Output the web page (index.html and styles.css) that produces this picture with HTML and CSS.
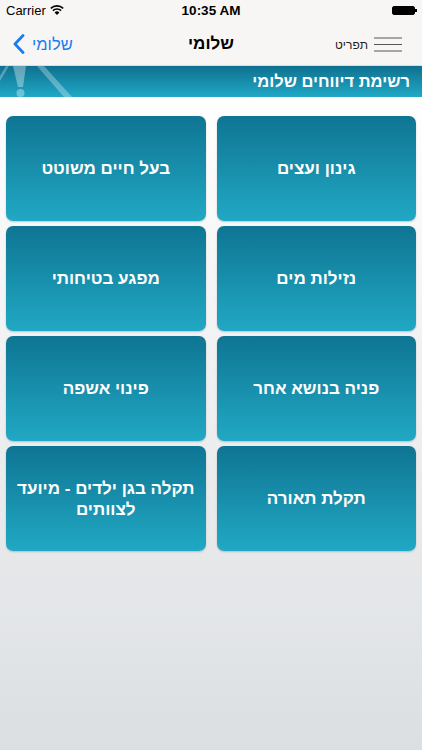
FILE: index.html
```html
<!DOCTYPE html>
<html lang="he">
<head>
    <meta charset="UTF-8">
    <meta name="viewport" content="width=device-width, initial-scale=1.0">
    <title>שלומי</title>
    <link rel="stylesheet" href="styles.css">
</head>
<body>
<div class="status-bar">
    <div class="carrier">
        Carrier
        <svg class="wifi" width="14" height="10" viewBox="0 0 14 10">
            <path d="M7 10 L4.6 7.4 A3.4 3.4 0 0 1 9.4 7.4 Z" fill="#000"/>
            <path d="M2.9 5.6 A5.9 5.9 0 0 1 11.1 5.6" stroke="#000" stroke-width="1.6" fill="none"/>
            <path d="M0.8 3.4 A9 9 0 0 1 13.2 3.4" stroke="#000" stroke-width="1.6" fill="none"/>
        </svg>
    </div>
    <div class="clock">10:35 AM</div>
    <div class="battery"><span></span></div>
</div>

<div class="navbar">
    <a class="back" href="#">
        <svg width="12" height="20" viewBox="0 0 12 20">
            <path d="M10 1.5 L2 10 L10 18.5" stroke="#1a7cf2" stroke-width="2.8" fill="none" stroke-linecap="round" stroke-linejoin="round"/>
        </svg>
        <span>שלומי</span>
    </a>
    <div class="nav-title">שלומי</div>
    <a class="menu" href="#">
        <span>תפריט</span>
        <svg width="28" height="16" viewBox="0 0 28 16">
            <line x1="0" y1="1" x2="28" y2="1" stroke="#555" stroke-width="1"/>
            <line x1="0" y1="7.5" x2="28" y2="7.5" stroke="#555" stroke-width="1"/>
            <line x1="0" y1="14" x2="28" y2="14" stroke="#555" stroke-width="1"/>
        </svg>
    </a>
</div>

<div class="banner">
    <svg class="banner-art" width="90" height="31" viewBox="0 0 90 31">
        <path d="M0 10 L6 0 L9 0 L0 15 Z" fill="rgba(255,255,255,0.28)"/>
        <path d="M13 0 L26 0 L23 21 L18 21 Z" fill="rgba(255,255,255,0.35)"/>
        <circle cx="20.5" cy="27" r="4" fill="rgba(255,255,255,0.35)"/>
        <path d="M37 0 L44 0 L72 31 L64 31 Z" fill="rgba(255,255,255,0.3)"/>
    </svg>
    <h1>רשימת דיווחים שלומי</h1>
</div>

<div class="reports">
    <a class="report" href="#">גינון ועצים</a>
    <a class="report" href="#">בעל חיים משוטט</a>
    <a class="report" href="#">נזילות מים</a>
    <a class="report" href="#">מפגע בטיחותי</a>
    <a class="report" href="#">פניה בנושא אחר</a>
    <a class="report" href="#">פינוי אשפה</a>
    <a class="report" href="#">תקלת תאורה</a>
    <a class="report" href="#">תקלה בגן ילדים - מיועד לצוותים</a>
</div>
</body>
</html>
```

FILE: styles.css
```css
body {
    font-family: 'Liberation Sans', 'DejaVu Sans', sans-serif;
    margin: 0;
    width: 422px;
    height: 750px;
    overflow: hidden;
    background: linear-gradient(to bottom, #ffffff 96px, #f0f1f2 360px, #dcdfe2 750px);
}

a {
    text-decoration: none;
}

.status-bar {
    height: 20px;
    background-color: #f7f6f4;
    display: flex;
    align-items: center;
    justify-content: space-between;
    padding: 0 7px 0 6px;
    font-size: 13px;
    color: #000;
    position: relative;
}

.carrier {
    display: flex;
    align-items: center;
    gap: 4px;
}

.clock {
    font-weight: bold;
    position: absolute;
    left: 0;
    right: 0;
    text-align: center;
    font-size: 13.5px;
}

.battery {
    width: 21px;
    height: 7px;
    border: 1px solid #000;
    border-radius: 2px;
    position: relative;
    display: flex;
}

.battery span {
    flex: 1;
    background-color: #000;
}

.battery::after {
    content: "";
    position: absolute;
    right: -3px;
    top: 2px;
    width: 2px;
    height: 3px;
    background-color: #000;
}

.navbar {
    height: 45px;
    background-color: #f7f6f4;
    display: flex;
    align-items: center;
    justify-content: space-between;
    padding: 0 20px 0 13px;
    position: relative;
}

.back {
    display: flex;
    align-items: center;
    gap: 7px;
    color: #1a7cf2;
    font-size: 16.5px;
    padding-top: 3px;
}

.nav-title {
    position: absolute;
    left: 0;
    right: 0;
    text-align: center;
    font-weight: bold;
    font-size: 17px;
    padding-top: 3px;
    pointer-events: none;
}

.menu {
    display: flex;
    align-items: center;
    gap: 6px;
    color: #222;
    font-size: 12px;
    padding-top: 4px;
}

.banner {
    height: 31px;
    background: linear-gradient(to bottom, #0f7090, #1fa9c6);
    position: relative;
    display: flex;
    align-items: center;
    justify-content: flex-end;
    padding: 0 12px;
    border-top: 1px solid #d8dfe0;
}

.banner-art {
    position: absolute;
    left: 0;
    top: 0;
}

.banner h1 {
    margin: 0;
    color: #ffffff;
    font-size: 16.5px;
    font-weight: bold;
    direction: rtl;
}

.reports {
    direction: rtl;
    display: grid;
    grid-template-columns: 1fr 1fr;
    gap: 5px 11px;
    padding: 19px 6px 0;
}

.report {
    height: 105px;
    border-radius: 7px;
    background: linear-gradient(to bottom, #0e7593, #21a8c4);
    box-shadow: 0 1px 2px rgba(0, 0, 0, 0.2);
    color: #ffffff;
    font-weight: bold;
    font-size: 17px;
    line-height: 21px;
    display: flex;
    align-items: center;
    justify-content: center;
    text-align: center;
    padding: 0 4px;
}
```
